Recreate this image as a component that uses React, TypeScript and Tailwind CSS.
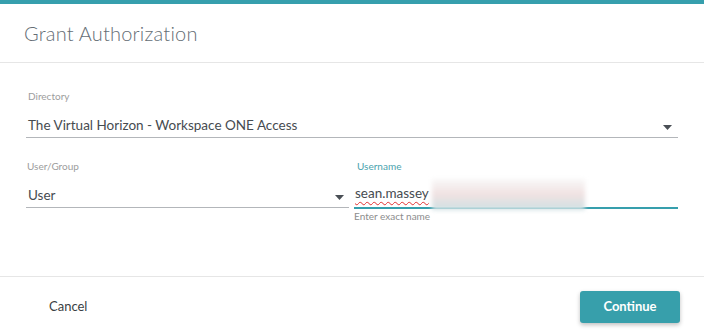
import React from "react";

const Caret = () => (
  <svg width="9" height="5" viewBox="0 0 9 5" className="shrink-0">
    <path d="M0 0 H9 L4.5 5 Z" fill="#4a4f55" />
  </svg>
);

export default function App() {
  return (
    <div
      className="w-[704px] h-[336px] bg-white border-t-4 border-[#369fad] flex flex-col overflow-hidden"
      style={{ fontFamily: "Lato, 'Open Sans', sans-serif" }}
    >
      <div className="h-[59px] shrink-0 flex items-center px-6 border-b border-[#e6e6e6]">
        <h1 className="text-[20px] font-light text-[#646d75] tracking-[0.2px]">Grant Authorization</h1>
      </div>

      <div className="flex-1 pl-[26px] pr-[26px] pt-[26px] border-b border-[#e6e6e6]">
        <div className="text-[10px] leading-[14px] text-[#9d9d9d] pl-[2px]">Directory</div>
        <div className="mt-[12px] flex items-center justify-between border-b border-[#b3b6ba] h-[23px] pb-[1px]">
          <span className="text-[13.5px] text-[#464b50] pl-[2px]">The Virtual Horizon - Workspace ONE Access</span>
          <span className="mr-[6px] mt-[4px]"><Caret /></span>
        </div>

        <div className="mt-[21px] flex gap-[5px]">
          <div className="w-[323px]">
            <div className="text-[10px] leading-[14px] text-[#9d9d9d] pl-[1px]">User/Group</div>
            <div className="mt-[12px] flex items-center justify-between border-b border-[#b3b6ba] h-[23px] pb-[1px]">
              <span className="text-[13.5px] text-[#464b50] pl-[2px]">User</span>
              <span className="mr-[5px] mt-[4px]"><Caret /></span>
            </div>
          </div>
          <div className="flex-1">
            <div className="text-[10px] leading-[14px] text-[#4aa3ae] pl-[3px]">Username</div>
            <div className="mt-[10px] relative flex items-center border-b-2 border-[#369fad] h-[26px] pb-[3px]">
              <span className="text-[13.5px] text-[#464b50] pl-[1px] underline decoration-wavy decoration-[#e03030] decoration-1 underline-offset-[3px]">
                sean.massey
              </span>
              <div className="absolute left-[78px] top-[-4px] w-[153px] h-[31px] bg-gradient-to-b from-[#f8f8f8] via-[#f0e2e2] to-[#cfe1e4] blur-[2px]" />
            </div>
            <div className="mt-[1px] text-[10px] leading-[13px] text-[#8d8d8d]">Enter exact name</div>
          </div>
        </div>
      </div>

      <div className="h-[59px] shrink-0 flex items-center justify-between pl-[49px] pr-[24px]">
        <button className="text-[13px] text-[#3a3f44]">Cancel</button>
        <button className="w-[100px] h-[32px] rounded-[3px] bg-[#379fab] text-white text-[13px] font-bold shadow-[0_2px_4px_rgba(0,0,0,0.25)]">
          Continue
        </button>
      </div>
    </div>
  );
}
